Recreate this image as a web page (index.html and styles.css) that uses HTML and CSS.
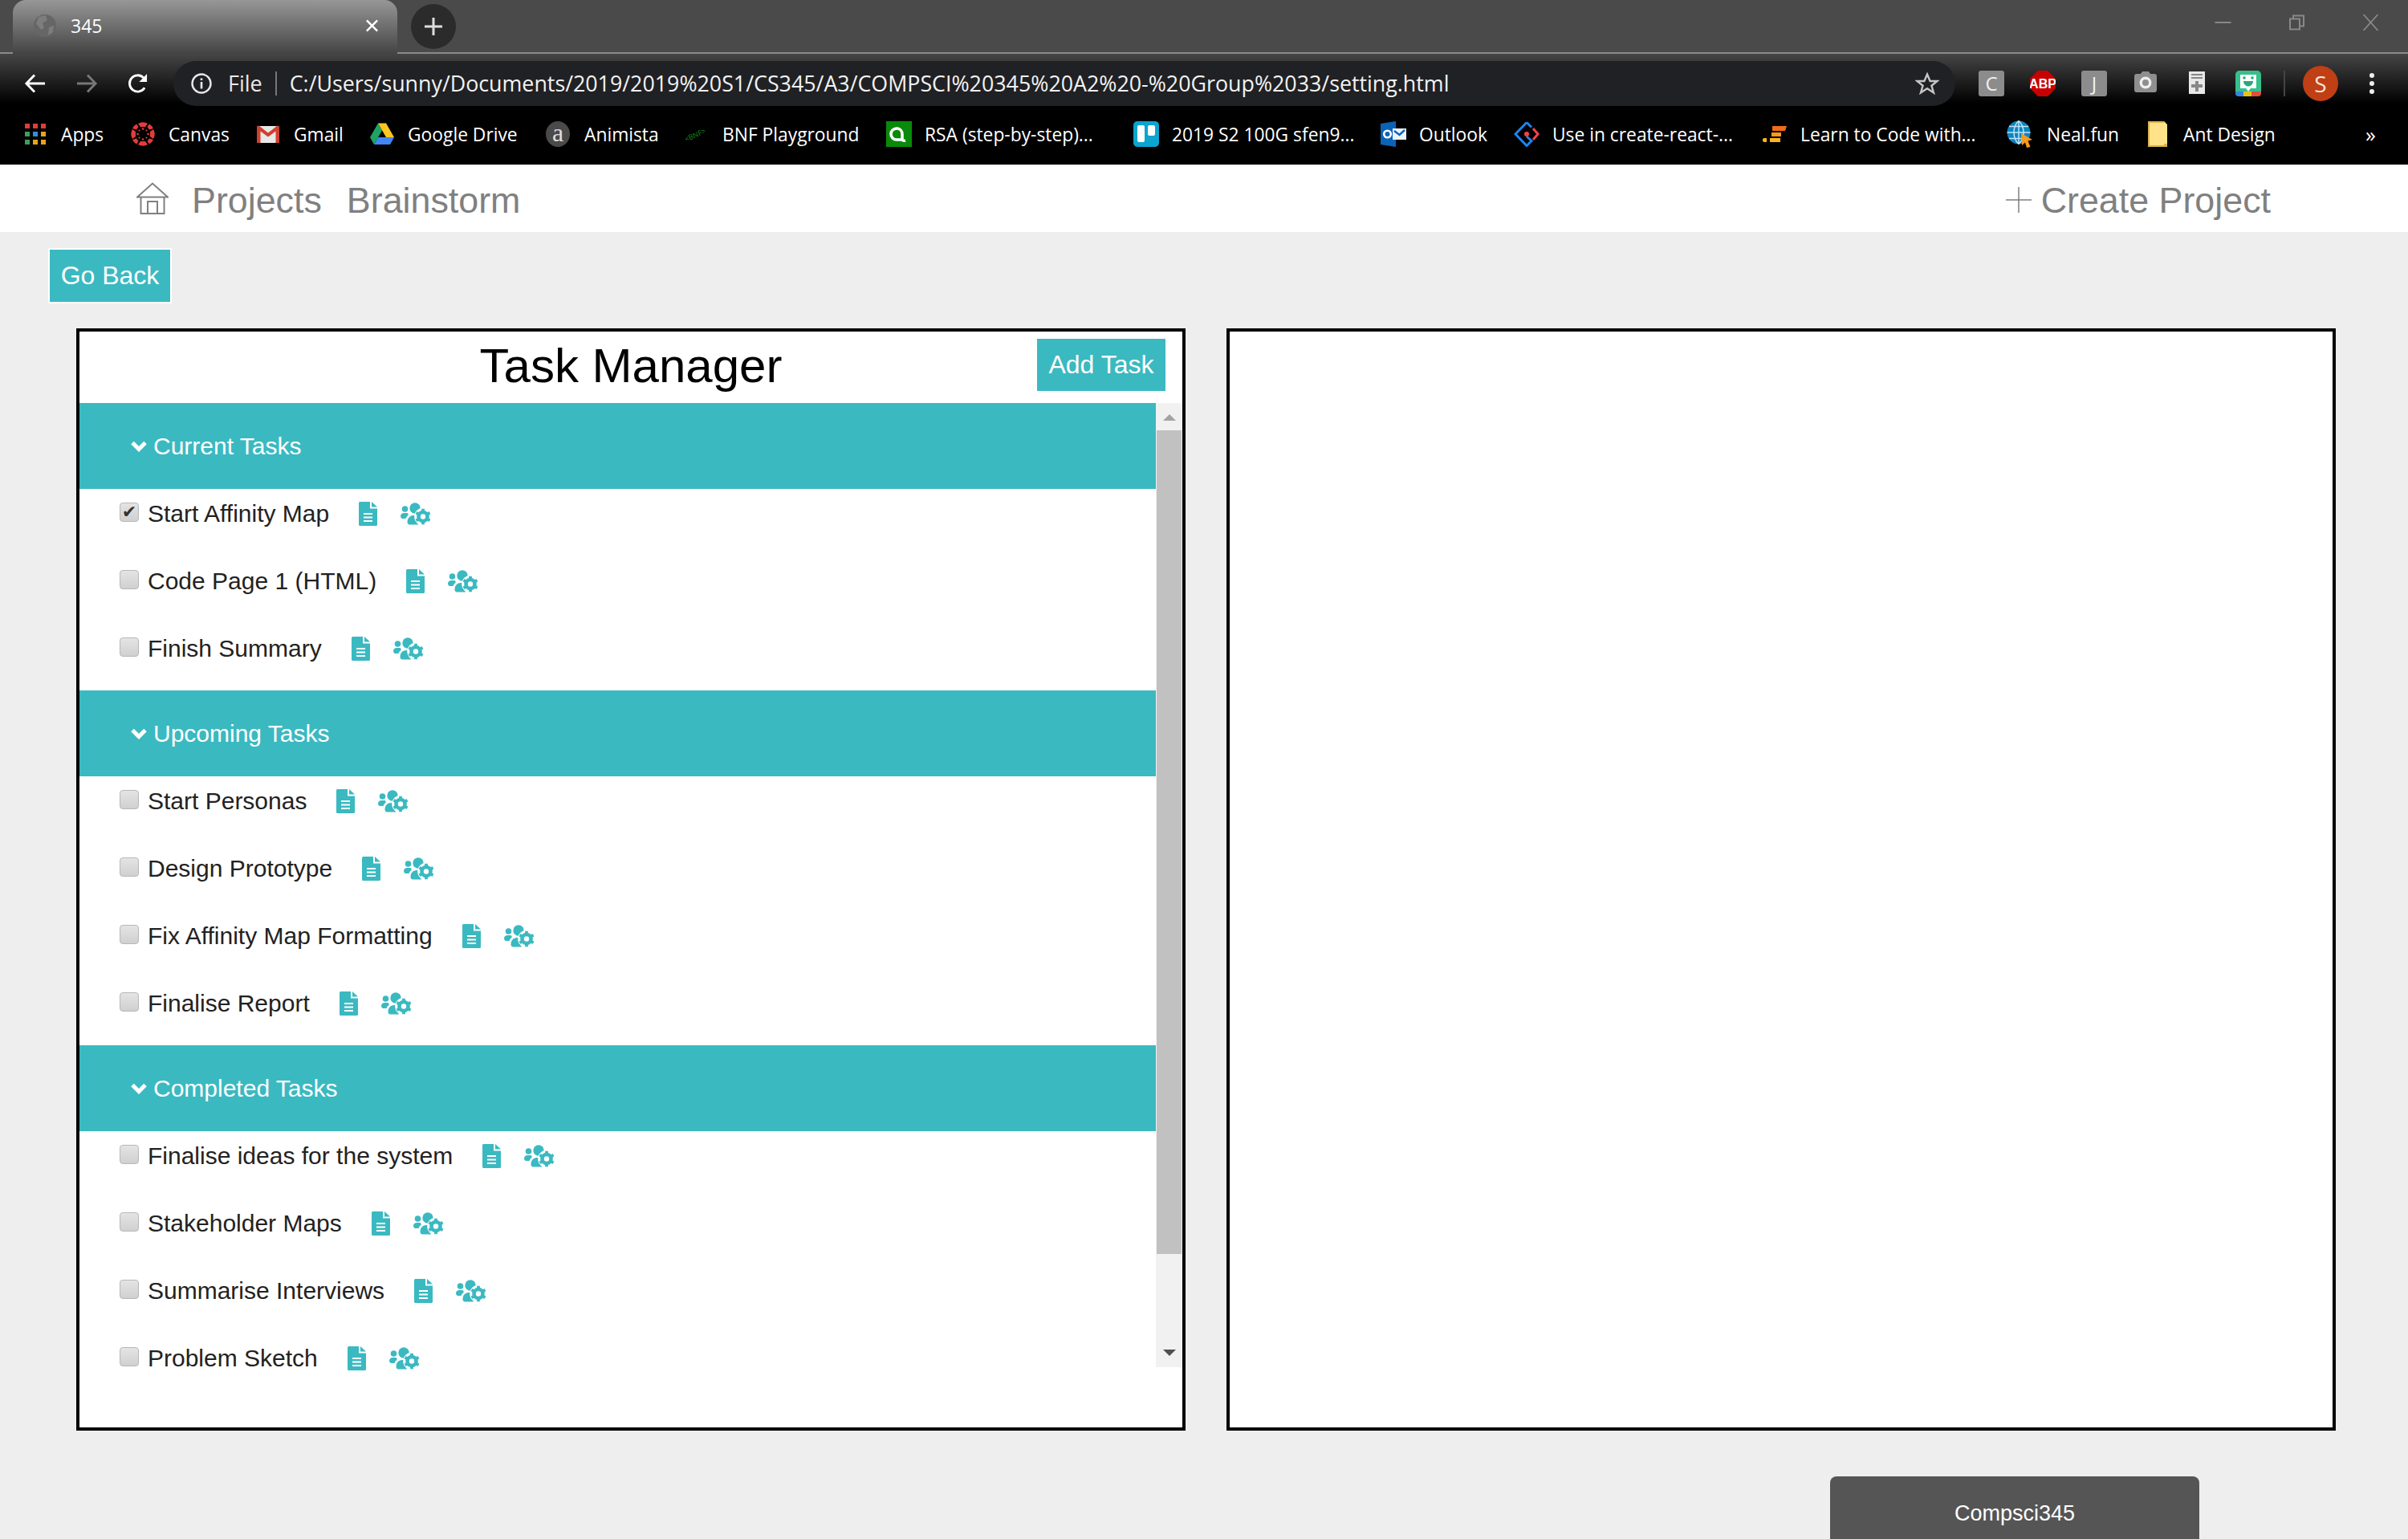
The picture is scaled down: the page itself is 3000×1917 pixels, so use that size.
FILE: index.html
```html
<!DOCTYPE html>
<html lang="en">
<head>
<meta charset="utf-8">
<title>345</title>
<link rel="stylesheet" href="styles.css">
</head>
<body>
<svg class="defs" width="0" height="0" aria-hidden="true">
  <symbol id="doc" viewBox="0 0 23 30">
    <path fill="#3bb9c1" d="M1.5 0H14V8.5H23V28.5A1.5 1.5 0 0 1 21.5 30H1.5A1.5 1.5 0 0 1 0 28.5V1.5A1.5 1.5 0 0 1 1.5 0Z"/>
    <path fill="#3bb9c1" d="M16 0L23 6.5H16Z"/>
    <path fill="#fff" d="M6 14H17V16H6ZM6 18.5H17V20.5H6ZM6 23H17V25H6Z"/>
  </symbol>
  <symbol id="group" viewBox="0 0 38 28">
    <circle cx="18" cy="7" r="6.700" fill="#3bb9c1"/>
    <circle cx="5.500" cy="8" r="3.800" fill="#3bb9c1"/>
    <path fill="#3bb9c1" d="M0 17C0 14.500 2 13 4.500 13H8.500C9.500 14 10 15 9.500 16C8 17 7 18.500 6.500 20H2.500C1 20 0 18.500 0 17Z"/>
    <path fill="#3bb9c1" d="M8.500 24.500C8.500 19.500 11.500 16 16 16H21C20 19 20 23 22 27.500H11.500C9.800 27.500 8.500 26.200 8.500 24.500Z"/>
    <circle cx="28" cy="17.500" r="10.800" fill="#fff"/>
    <g transform="translate(28 17.500)">
      <circle r="5.500" fill="none" stroke="#3bb9c1" stroke-width="4.600"/>
      <path stroke="#3bb9c1" stroke-width="3.800" d="M0-9.800V-6.500M0 6.500V9.800M-8.500-4.900L-5.600-3.200M5.600 3.200L8.500 4.900M-8.500 4.900L-5.600 3.200M5.600-3.200L8.500-4.900"/>
    </g>
  </symbol>
</svg>

<header class="browser">
  <div class="tabstrip">
    <div class="tab">
      <svg class="fav" viewBox="0 0 28 30"><circle cx="14" cy="15" r="14" fill="#666"/><path fill="#7d7d7d" d="M6 4L15 2L17 8L11 12L13 18L9 20L3 12ZM19 17L25 15L24 23L18 27Z"/></svg>
      <span class="tab-title">345</span>
      <svg class="tab-x" viewBox="0 0 18 18"><path d="M2 2L16 16M16 2L2 16" stroke="#fff" stroke-width="2.600"/></svg>
    </div>
    <div class="newtab"><svg viewBox="0 0 24 24" width="24" height="24"><path d="M12 1V23M1 12H23" stroke="#ddd" stroke-width="3"/></svg></div>
    <div class="winctl">
      <svg class="win-min" viewBox="0 0 20 20"><path d="M0 10H20" stroke="#888" stroke-width="2"/></svg>
      <svg class="win-res" viewBox="0 0 20 20"><path d="M1.500 5.500H13.500V18.500H1.500ZM5.500 5V1.500H18.500V14.500H14" fill="none" stroke="#888" stroke-width="2"/></svg>
      <svg class="win-cls" viewBox="0 0 20 20"><path d="M1 0L19 20M19 0L1 20" stroke="#888" stroke-width="1.800"/></svg>
    </div>
  </div>

  <div class="toolbar">
    <svg class="nav" viewBox="0 0 28 28"><path d="M27 14H3M13.500 3L3 14L13.500 25" fill="none" stroke="#fff" stroke-width="3"/></svg>
    <svg class="nav fwd" viewBox="0 0 28 28"><path d="M1 14H25M14.500 3L25 14L14.500 25" fill="none" stroke="#777" stroke-width="3"/></svg>
    <svg class="nav rel" viewBox="0 0 28 28"><path d="M23 19.500A10.500 10.500 0 1 1 21.500 6.500" fill="none" stroke="#fff" stroke-width="3"/><path fill="#fff" d="M26 1.500V12H16Z"/></svg>
    <div class="omnibox">
      <svg class="info" viewBox="0 0 26 26"><circle cx="13" cy="13" r="11.500" fill="none" stroke="#e8e8e8" stroke-width="2.400"/><path fill="#e8e8e8" d="M11.700 11H14.300V19.500H11.700ZM11.700 6.500H14.300V9H11.700Z"/></svg>
      <span class="scheme">File</span>
      <span class="sep"></span>
      <span class="url">C:/Users/sunny/Documents/2019/2019%20S1/CS345/A3/COMPSCI%20345%20A2%20-%20Group%2033/setting.html</span>
      <svg class="star" viewBox="0 0 30 28"><path d="M15 2.500L18.600 11H27.500L20.400 16.700L23 25.500L15 20.300L7 25.500L9.600 16.700L2.500 11H11.400Z" fill="none" stroke="#c4c4c4" stroke-width="2.400"/></svg>
    </div>
    <div class="exts">
      <span class="ext-tile">C</span>
      <svg class="ext" viewBox="0 0 32 32"><path fill="#c80000" d="M10 0H22L32 10V22L22 32H10L0 22V10Z"/><text x="16" y="22" class="abp">ABP</text></svg>
      <span class="ext-tile">J</span>
      <svg class="ext" viewBox="0 0 32 32"><path fill="#8f8f8f" d="M10 4L12 1H20L22 4H27A3 3 0 0 1 30 7V24A3 3 0 0 1 27 27H5A3 3 0 0 1 2 24V7A3 3 0 0 1 5 4Z"/><circle cx="16" cy="15" r="7.500" fill="#eee"/><circle cx="16" cy="15" r="4" fill="#8f8f8f"/></svg>
      <svg class="ext" viewBox="0 0 32 32"><path fill="#e8e8e8" d="M6 1H26V29H6Z"/><path fill="#888" d="M9 4H23V6H9ZM9 8H23V10H9ZM14 13H18V17H23V21H18V26H14V21H9V17H14Z"/></svg>
      <svg class="ext" viewBox="0 0 32 32"><rect width="32" height="32" rx="5" fill="#35c08c"/><path fill="#3a84e0" d="M0 26H10V32H4Q0 32 0 28Z"/><path fill="#e8c21c" d="M10 26H20V32H10Z"/><path fill="#e0503c" d="M20 26H32V28Q32 32 28 32H20Z"/><path fill="#fff" d="M6 5H26V22H19L16 26L13 22H6Z"/><circle cx="11" cy="9" r="1.800" fill="#2aa87a"/><circle cx="21" cy="9" r="1.800" fill="#2aa87a"/><path fill="#2aa87a" d="M10 13H22C22 17 19 19.500 16 19.500S10 17 10 13Z"/></svg>
    </div>
    <span class="tool-sep"></span>
    <span class="avatar">S</span>
    <span class="dots"><i></i><i></i><i></i></span>
  </div>

  <nav class="bookmarks">
    <a class="bm bm-apps"><svg class="bi" viewBox="0 0 26 26"><path fill="#e33b3b" d="M0 0H6V6H0ZM10 0H16V6H10ZM20 0H26V6H20Z"/><path fill="#3e9e5a" d="M0 10H6V16H0Z"/><path fill="#2f8fe0" d="M10 10H16V16H10Z"/><path fill="#e8a21c" d="M20 10H26V16H20ZM10 20H16V26H10ZM20 20H26V26H20Z"/><path fill="#3e9e5a" d="M0 20H6V26H0Z"/></svg><span>Apps</span></a>
    <a class="bm"><svg class="bi" viewBox="0 0 32 32"><g fill="#e23d3d"><path d="M10 3Q16-.5 22 3L19 7H13Z"/><path d="M10 29Q16 32.500 22 29L19 25H13Z"/><path d="M3 10Q-.5 16 3 22L7 19V13Z"/><path d="M29 10Q32.500 16 29 22L25 19V13Z"/><path d="M24 3.500Q27.500 5.500 29 9L24 10.500L21.500 7Z"/><path d="M8 3.500Q4.500 5.500 3 9L8 10.500L10.500 7Z"/><path d="M24 28.500Q27.500 26.500 29 23L24 21.500L21.500 25Z"/><path d="M8 28.500Q4.500 26.500 3 23L8 21.500L10.500 25Z"/><circle cx="16" cy="9.500" r="1.300"/><circle cx="16" cy="22.500" r="1.300"/><circle cx="9.500" cy="16" r="1.300"/><circle cx="22.500" cy="16" r="1.300"/><circle cx="11.500" cy="11.500" r="1.100"/><circle cx="20.500" cy="11.500" r="1.100"/><circle cx="11.500" cy="20.500" r="1.100"/><circle cx="20.500" cy="20.500" r="1.100"/></g></svg><span>Canvas</span></a>
    <a class="bm bm-gmail"><svg class="bi" viewBox="0 0 28 22"><rect y="1" width="28" height="21" rx="2" fill="#e8e8e8"/><path fill="#d0402f" d="M0 3Q0 .5 2.500 .5L14 9.500L25.500 .5Q28 .5 28 3V22H23.500V7.500L14 14.500L4.500 7.500V22H0Z"/></svg><span>Gmail</span></a>
    <a class="bm bm-w30"><svg class="bi" viewBox="0 0 30 27"><path fill="#1ea362" d="M10 0L0 17.500L5 26.500L15 9Z"/><path fill="#ffc720" d="M10 0H20L30 17.500H20Z"/><path fill="#4285f4" d="M5 26.500H25L30 17.500H10Z"/></svg><span>Google Drive</span></a>
    <a class="bm bm-w18"><span class="anim">a</span><span>Animista</span></a>
    <a class="bm bm-w18"><span class="bnf">&lt;BNF&gt;</span><span>BNF Playground</span></a>
    <a class="bm"><svg class="bi" viewBox="0 0 32 32"><rect width="32" height="32" fill="#0a8a0a"/><path d="M19 23H13A7 7 0 0 1 13 9H14A7 7 0 0 1 20 16V22Q20 25 24 24" fill="none" stroke="#fff" stroke-width="3.600"/></svg><span>RSA (step-by-step)...</span></a>
    <a class="bm"><svg class="bi" viewBox="0 0 32 32"><rect width="32" height="32" rx="5" fill="#0ba5cf"/><rect x="5" y="5" width="9" height="21" rx="2" fill="#fff"/><rect x="18" y="5" width="9" height="13" rx="2" fill="#fff"/></svg><span>2019 S2 100G sfen9...</span></a>
    <a class="bm"><svg class="bi" viewBox="0 0 32 32"><path fill="#0b63b8" d="M0 3L19 0V32L0 29Z"/><rect x="15" y="9" width="17" height="14" fill="#eaf2fb"/><path d="M17 12L23.500 17L30 11" fill="none" stroke="#0b63b8" stroke-width="2.400"/><circle cx="8.500" cy="16" r="4.300" fill="none" stroke="#fff" stroke-width="2.600"/></svg><span>Outlook</span></a>
    <a class="bm"><svg class="bi" viewBox="0 0 32 32"><path d="M16 1.500L2 16L16 30.500L22 24.500L16 19" fill="none" stroke="#1c86ee" stroke-width="3"/><path d="M16 1.500L22 7.500" stroke="#1c86ee" stroke-width="3"/><path d="M24 9L30 16L24 23" fill="none" stroke="#f4424c" stroke-width="3"/><circle cx="16" cy="16" r="3" fill="#f4424c"/></svg><span>Use in create-react-...</span></a>
    <a class="bm bm-w30"><svg class="bi" viewBox="0 0 30 20"><path fill="#f26a1b" d="M12 0H30L28 6H12Z"/><path fill="#f79a1e" d="M11 8H23V13H11Z"/><path fill="#fcb521" d="M0 17Q0 15 2 15H5V20H2Q0 20 0 18ZM9 15H22V20H9Z"/></svg><span>Learn to Code with...</span></a>
    <a class="bm bm-neal"><svg class="bi" viewBox="0 0 34 34"><circle cx="15" cy="15" r="14.500" fill="#0c85c2"/><path d="M15 .5V29.500M.5 15H29.500M3 7.500H27M3 22.500H27M15 .5C7 8 7 22 15 29.500M15 .5C23 8 23 22 15 29.500" fill="none" stroke="#bfe4f5" stroke-width="1.500"/><path fill="#f79a1e" d="M18 16L32 24L26.500 25.500L29.500 33L25 34L23 27.500L19 31Z"/></svg><span>Neal.fun</span></a>
    <a class="bm bm-folder"><svg class="folder" viewBox="0 0 24 32"><path fill="#ffe28a" d="M0 0H20L24 4V32H0Z"/><path fill="#d9b24a" d="M0 0H20V2H2V32H0ZM20 28H24V32H0V30H20Z"/></svg><span>Ant Design</span></a>
    <span class="more">»</span>
  </nav>
</header>

<section class="topnav">
  <div class="topnav-left">
    <svg class="home" viewBox="0 0 40 40"><path d="M1 18.500L20 1.500L39 18.500ZM5.500 18.500V39H34.500V18.500M14 39V24H26V39" fill="none" stroke="#808080" stroke-width="2"/></svg>
    <a class="toplink projects">Projects</a>
    <a class="toplink">Brainstorm</a>
  </div>
  <a class="toplink create"><svg class="plus" viewBox="0 0 32 32"><path d="M16 0V32M0 16H32" stroke="#808080" stroke-width="1.500"/></svg>Create Project</a>
</section>

<main class="page">
  <button class="goback">Go Back</button>
  <div class="panels">
    <section class="panel">
      <div class="panel-head">
        <span></span>
        <h1 class="title">Task Manager</h1>
        <button class="addtask">Add Task</button>
      </div>
      <div class="scroller">
        <div class="tasklists">
          <div class="group-head"><svg class="chev" viewBox="0 0 20 14"><path d="M2 2.500L10 10.500L18 2.500" fill="none" stroke="#fff" stroke-width="5"/></svg>Current Tasks</div>
          <ul class="tasks">
            <li class="task"><input class="cb" type="checkbox" checked disabled><span>Start Affinity Map</span><svg class="i-doc"><use href="#doc"/></svg><svg class="i-group"><use href="#group"/></svg></li>
            <li class="task"><input class="cb" type="checkbox" disabled><span>Code Page 1 (HTML)</span><svg class="i-doc"><use href="#doc"/></svg><svg class="i-group"><use href="#group"/></svg></li>
            <li class="task"><input class="cb" type="checkbox" disabled><span>Finish Summary</span><svg class="i-doc"><use href="#doc"/></svg><svg class="i-group"><use href="#group"/></svg></li>
          </ul>
          <div class="group-head"><svg class="chev" viewBox="0 0 20 14"><path d="M2 2.500L10 10.500L18 2.500" fill="none" stroke="#fff" stroke-width="5"/></svg>Upcoming Tasks</div>
          <ul class="tasks">
            <li class="task"><input class="cb" type="checkbox" disabled><span>Start Personas</span><svg class="i-doc"><use href="#doc"/></svg><svg class="i-group"><use href="#group"/></svg></li>
            <li class="task"><input class="cb" type="checkbox" disabled><span>Design Prototype</span><svg class="i-doc"><use href="#doc"/></svg><svg class="i-group"><use href="#group"/></svg></li>
            <li class="task"><input class="cb" type="checkbox" disabled><span>Fix Affinity Map Formatting</span><svg class="i-doc"><use href="#doc"/></svg><svg class="i-group"><use href="#group"/></svg></li>
            <li class="task"><input class="cb" type="checkbox" disabled><span>Finalise Report</span><svg class="i-doc"><use href="#doc"/></svg><svg class="i-group"><use href="#group"/></svg></li>
          </ul>
          <div class="group-head"><svg class="chev" viewBox="0 0 20 14"><path d="M2 2.500L10 10.500L18 2.500" fill="none" stroke="#fff" stroke-width="5"/></svg>Completed Tasks</div>
          <ul class="tasks">
            <li class="task"><input class="cb" type="checkbox" disabled><span>Finalise ideas for the system</span><svg class="i-doc"><use href="#doc"/></svg><svg class="i-group"><use href="#group"/></svg></li>
            <li class="task"><input class="cb" type="checkbox" disabled><span>Stakeholder Maps</span><svg class="i-doc"><use href="#doc"/></svg><svg class="i-group"><use href="#group"/></svg></li>
            <li class="task"><input class="cb" type="checkbox" disabled><span>Summarise Interviews</span><svg class="i-doc"><use href="#doc"/></svg><svg class="i-group"><use href="#group"/></svg></li>
            <li class="task"><input class="cb" type="checkbox" disabled><span>Problem Sketch</span><svg class="i-doc"><use href="#doc"/></svg><svg class="i-group"><use href="#group"/></svg></li>
          </ul>
        </div>
        <div class="scrollbar">
          <span class="arrow up"></span>
          <span class="thumb"></span>
          <span class="arrow down"></span>
        </div>
      </div>
    </section>
    <section class="panel"></section>
  </div>
  <footer class="foot"><div class="foot-tab">Compsci345</div></footer>
</main>
</body>
</html>
```

FILE: styles.css
```css
* { box-sizing: border-box; }
html, body { margin: 0; height: 1917px; overflow: hidden; }
body { background: #eee; font-family: "Liberation Sans", Arial, sans-serif; }
.defs { position: absolute; }

/* browser chrome */
.browser { font-family: "Open Sans", "Noto Sans", sans-serif; color: #fff; }
.tabstrip { height: 67px; background: #4a4a4a; border-bottom: 2px solid #8a8a8a; display: flex; align-items: flex-start; position: relative; }
.tab { margin-left: 16px; width: 479px; height: 67px; border-radius: 16px 16px 0 0; background: linear-gradient(#979797, #444 100%); display: flex; align-items: center; padding: 0 23px 3px 26px; }
.fav { width: 28px; height: 30px; margin-right: 18px; }
.tab-title { font-size: 23px; flex: 1; }
.tab-x { width: 17px; height: 18px; }
.newtab { width: 56px; height: 56px; border-radius: 50%; background: #2b2b2b; margin: 5px 0 0 17px; display: flex; align-items: center; justify-content: center; }
.winctl { margin-left: auto; display: flex; align-items: center; padding: 18px 36px 0 0; gap: 71px; }
.winctl svg { width: 21px; height: 20px; display: block; }

.toolbar { height: 73px; margin-top: 0; background: linear-gradient(#454545 0, #000 62px); display: flex; align-items: center; padding-left: 30px; }
.nav { width: 27px; height: 28px; flex: none; }
.fwd { margin-left: 38px; }
.rel { margin-left: 36px; }
.omnibox { width: 2220px; height: 56px; margin-left: 31px; border-radius: 28px; background: #202124; display: flex; align-items: center; padding: 0 20px 0 22px; flex: none; }
.info { width: 26px; height: 26px; flex: none; }
.scheme { font-size: 27px; margin-left: 20px; color: #e8e8e8; }
.sep { width: 2px; height: 30px; background: #777; margin: 0 16px 0 16px; }
.url { font-size: 26.8px; color: #f2f2f2; white-space: nowrap; }
.star { width: 30px; height: 28px; margin-left: auto; }
.exts { display: flex; gap: 32px; margin-left: 29px; flex: none; }
.ext { width: 32px; height: 32px; display: block; }
.ext-tile { width: 32px; height: 32px; border-radius: 3px; background: #8c8c8c; color: #f0f0f0; font-size: 24px; display: flex; align-items: center; justify-content: center; }
.abp { font: bold 16px "Liberation Sans", sans-serif; fill: #fff; text-anchor: middle; }
.tool-sep { width: 2px; height: 32px; background: #444; margin-left: 28px; }
.avatar { width: 44px; height: 44px; border-radius: 50%; background: #c03f14; margin-left: 22px; display: flex; align-items: center; justify-content: center; font-size: 28px; color: #f6e3dc; }
.dots { margin-left: 39px; display: flex; flex-direction: column; gap: 4px; }
.dots i { display: block; width: 6px; height: 6px; border-radius: 50%; background: #eee; }

.bookmarks { height: 65px; background: #000; padding: 0 0 11px 31px; display: grid; grid-template-columns: 131px 158px 141px 219px 172px 252px 308px 308px 166px 310px 304px 176px 271px 40px; align-items: center; font-size: 22.8px; }
.bm { display: flex; align-items: center; gap: 16px; white-space: nowrap; }
.bi { width: 32px; height: 32px; flex: none; }
.bm-apps { gap: 19px; }
.bm-apps .bi { width: 26px; height: 26px; }
.bm-gmail { gap: 18px; }
.bm-gmail .bi { width: 28px; height: 24px; }
.bm-w30 { gap: 17px; }
.bm-w30 .bi { width: 30px; }
.bm-w18 { gap: 18px; }
.bm-neal .bi { width: 34px; height: 34px; }
.bm-folder { gap: 20px; }
.folder { width: 24px; height: 32px; flex: none; }
.anim { width: 30px; height: 32px; border-radius: 50%; background: #4a4a4a; font: 32px "Liberation Serif", serif; color: #ddd; text-align: center; line-height: 28px; flex: none; }
.bnf { width: 30px; font-size: 9px; color: #1a8a1a; transform: rotate(-25deg); flex: none; }
.more { font-size: 26px; line-height: 1; }

/* top nav */
.topnav { height: 84px; background: #fff; display: flex; align-items: center; justify-content: space-between; padding: 0 171px 0 170px; }
.topnav-left { display: flex; align-items: center; }
.home { width: 40px; height: 40px; margin-right: 29px; }
.toplink { font-size: 44.8px; line-height: 52px; padding-top: 4px; color: #808080; display: flex; align-items: center; }
.projects { margin-right: 31px; }
.plus { width: 32px; height: 32px; margin-right: 12px; }

/* page */
.page { display: flow-root; }
.goback { display: block; width: 154px; height: 69px; margin: 20px 0 0 60px; background: #3bb9c1; border: 2px solid #fff; color: #fff; font: 32px "Liberation Sans", sans-serif; padding: 0; }
.panels { display: grid; grid-template-columns: 1382px 1382px; gap: 51px; padding-left: 95px; margin-top: 31px; }
.panel { height: 1373px; background: #fff; border: 4px solid #000; }
.panel-head { height: 89px; display: grid; grid-template-columns: 1fr auto 1fr; align-items: start; padding: 0 21px; }
.title { margin: 9px 0 0; font-size: 60px; font-weight: 400; line-height: 68px; color: #000; }
.addtask { justify-self: end; width: 160px; height: 65px; margin-top: 9px; background: #3bb9c1; border: 0; color: #fff; font: 32px "Liberation Sans", sans-serif; padding: 0; }

.scroller { height: 1201px; display: flex; }
.tasklists { width: 1341px; height: 1201px; flex: none; }
.group-head { height: 107px; background: #3bb9c1; color: #fff; font-size: 30px; display: flex; align-items: center; padding-left: 64px; }
.chev { width: 20px; height: 14px; margin-right: 8px; }
.tasks { list-style: none; margin: 0; padding: 0; }
.task { height: 62px; margin-bottom: 22px; display: flex; align-items: center; padding-left: 50px; font-size: 30px; color: #222; }
.task:last-child { margin-bottom: 21px; }
.cb { appearance: none; -webkit-appearance: none; width: 24px; height: 24px; margin: -4px 11px 0 0; flex: none; border: 1px solid #b8b8b8; border-radius: 4px; background: linear-gradient(#e4e4e4, #d0d0d0); display: flex; align-items: center; justify-content: center; }
.cb:checked::after { content: "✔"; font: 22px "DejaVu Sans", sans-serif; color: #333; line-height: 22px; }
.i-doc { width: 23px; height: 30px; margin-left: 37px; flex: none; }
.i-group { width: 38px; height: 28px; margin-left: 29px; flex: none; }

.scrollbar { width: 33px; flex: none; background: #f1f1f1; display: flex; flex-direction: column; align-items: center; }
.arrow { display: block; width: 0; height: 0; border-left: 8px solid transparent; border-right: 8px solid transparent; }
.up { border-bottom: 8px solid #a3a3a3; margin: 14px 0 12px; }
.down { border-top: 8px solid #505050; margin: 119px 0 0; }
.thumb { width: 31px; height: 1026px; background: #c1c1c1; }

.foot { display: flex; justify-content: flex-end; padding-right: 260px; margin-top: 57px; }
.foot-tab { width: 460px; height: 78px; background: #555; border-radius: 8px 8px 0 0; color: #fff; font-size: 27px; text-align: center; padding-top: 32px; line-height: 29px; }
```
